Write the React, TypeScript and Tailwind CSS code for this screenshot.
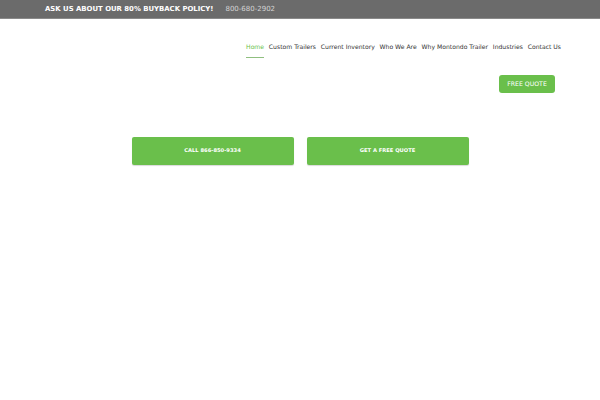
const navItems = [
  "Home",
  "Custom Trailers",
  "Current Inventory",
  "Who We Are",
  "Why Montondo Trailer",
  "Industries",
  "Contact Us",
];

function App() {
  return (
    <div className="min-h-screen bg-white font-['DejaVu_Sans',sans-serif]">
      <div className="flex h-[19px] items-center border-b border-[#8a8a8a] bg-[#6b6b6b] pl-[45px]">
        <span className="text-[6.9px] font-bold text-white">
          ASK US ABOUT OUR 80% BUYBACK POLICY!
        </span>
        <span className="ml-[12px] text-[7px] text-[#d4d4d4]">800-680-2902</span>
      </div>

      <nav className="mt-[23px] flex justify-end pr-[39px]">
        <ul className="flex gap-[4.8px] text-[6.1px] text-[#333]">
          {navItems.map((item, i) => (
            <li key={item} className="flex flex-col">
              <span className={i === 0 ? "text-[#6abf4b]" : ""}>{item}</span>
              {i === 0 ? <span className="mt-[6px] h-px bg-[#8fbf7f]" /> : null}
            </li>
          ))}
        </ul>
      </nav>

      <div className="mt-[17px] flex justify-end pr-[45px]">
        <button className="h-[18px] w-[56px] rounded-[3px] bg-[#6abf4b] text-[6.2px] text-white">
          FREE QUOTE
        </button>
      </div>

      <div className="mt-[44px] flex justify-center gap-[13px]">
        <button className="h-[28px] w-[162px] rounded-[2px] bg-[#6abf4b] text-[5.2px] font-bold text-white shadow-[0_1px_1px_rgba(0,0,0,0.15)]">
          CALL 866-850-9334
        </button>
        <button className="h-[28px] w-[162px] rounded-[2px] bg-[#6abf4b] text-[5.2px] font-bold text-white shadow-[0_1px_1px_rgba(0,0,0,0.15)]">
          GET A FREE QUOTE
        </button>
      </div>
    </div>
  );
}

export default App;
